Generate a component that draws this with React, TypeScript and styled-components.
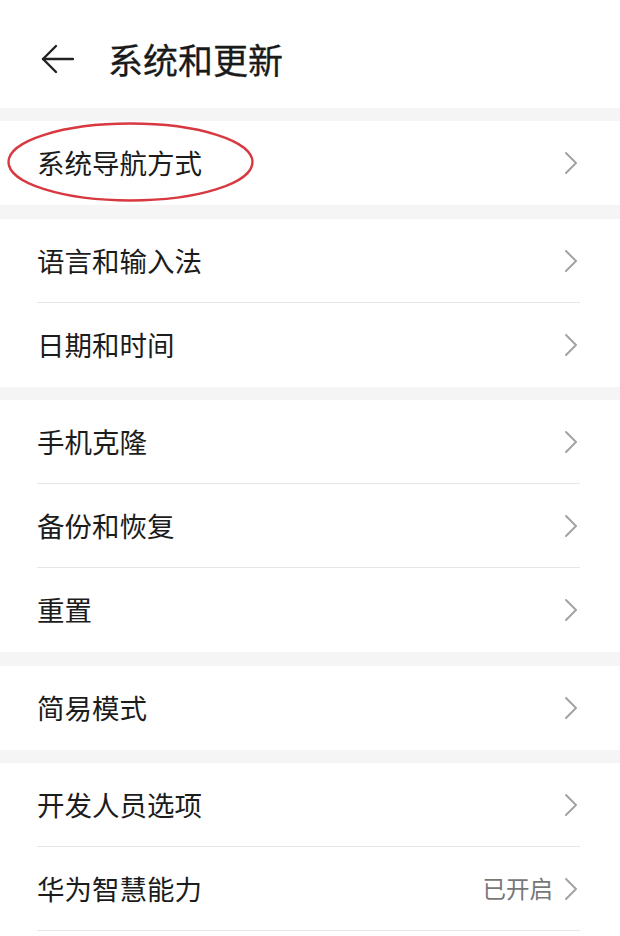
import React from "react";
import styled, { createGlobalStyle } from "styled-components";

const GlobalStyle = createGlobalStyle`
  html, body {
    margin: 0;
    padding: 0;
    background: #fff;
  }
  body {
    font-family: "Noto Sans CJK SC", "Noto Sans", sans-serif;
    color: #1c1c1c;
  }
`;

type Item = { label: string; value?: string; circled?: boolean };

const groups: Item[][] = [
  [{ label: "系统导航方式", circled: true }],
  [{ label: "语言和输入法" }, { label: "日期和时间" }],
  [{ label: "手机克隆" }, { label: "备份和恢复" }, { label: "重置" }],
  [{ label: "简易模式" }],
  [{ label: "开发人员选项" }, { label: "华为智慧能力", value: "已开启" }],
];

const Chevron = () => (
  <svg width="14" height="24" viewBox="0 0 14 24" fill="none">
    <polyline
      points="2,2 12,12 2,22"
      stroke="#a3a3a3"
      strokeWidth="2"
      strokeLinecap="round"
      strokeLinejoin="round"
    />
  </svg>
);

const BackArrow = () => (
  <svg width="34" height="30" viewBox="0 0 34 30" fill="none">
    <line x1="3" y1="15" x2="33" y2="15" stroke="#222" strokeWidth="2.4" strokeLinecap="round" />
    <polyline
      points="16,2 3,15 16,28"
      stroke="#222"
      strokeWidth="2.4"
      strokeLinecap="round"
      strokeLinejoin="round"
    />
  </svg>
);

// red hand-drawn annotation round the first item
const Circle = () => (
  <Annotation width="260" height="84" viewBox="0 0 260 84" fill="none">
    <ellipse cx="123.5" cy="41" rx="122" ry="38.5" stroke="#d8383f" strokeWidth="2.4" />
  </Annotation>
);

export default function App() {
  return (
    <>
      <GlobalStyle />
      <Page>
        <Header>
          <BackArrow />
          <Title>系统和更新</Title>
        </Header>
        {groups.map((group, gi) => (
          <React.Fragment key={gi}>
            <Band />
            <Group>
              {group.map((item, i) => (
                <Row key={item.label} divider={i < group.length - 1 || gi === groups.length - 1}>
                  {item.circled && <Circle />}
                  <Label>{item.label}</Label>
                  <Trail>
                    {item.value && <Value>{item.value}</Value>}
                    <Chevron />
                  </Trail>
                </Row>
              ))}
            </Group>
          </React.Fragment>
        ))}
      </Page>
    </>
  );
}

const Page = styled.div`
  width: 620px;
  min-height: 936px;
  background: #fff;
  display: flex;
  flex-direction: column;
`;

const Header = styled.div`
  height: 107.5px;
  display: flex;
  align-items: center;
  gap: 34px;
  padding: 10px 0 0 40px;
  box-sizing: border-box;
`;

const Title = styled.div`
  font-size: 35px;
  font-weight: 400;
  color: #1a1a1a;
  line-height: 1;
  -webkit-text-stroke: 0.3px #1a1a1a;
`;

const Band = styled.div`
  height: 13.5px;
  background: #f5f5f5;
`;

const Group = styled.div`
  display: flex;
  flex-direction: column;
  padding: 0 40px 0 37px;
`;

const Row = styled.div<{ divider: boolean }>`
  position: relative;
  height: 84px;
  box-sizing: border-box;
  display: flex;
  align-items: center;
  justify-content: space-between;
  border-bottom: ${(p) => (p.divider ? "1px solid #e6e6e6" : "none")};
  padding-top: ${(p) => (p.divider ? "1px" : "0")};
`;

const Label = styled.div`
  font-size: 27.5px;
  color: #1c1c1c;
  line-height: 1;
`;

const Trail = styled.div`
  display: flex;
  align-items: center;
  gap: 11px;
  margin-right: 2px;
`;

const Value = styled.div`
  font-size: 23.5px;
  color: #777;
  line-height: 1;
`;

const Annotation = styled.svg`
  position: absolute;
  left: -30px;
  top: 0;
  pointer-events: none;
`;
